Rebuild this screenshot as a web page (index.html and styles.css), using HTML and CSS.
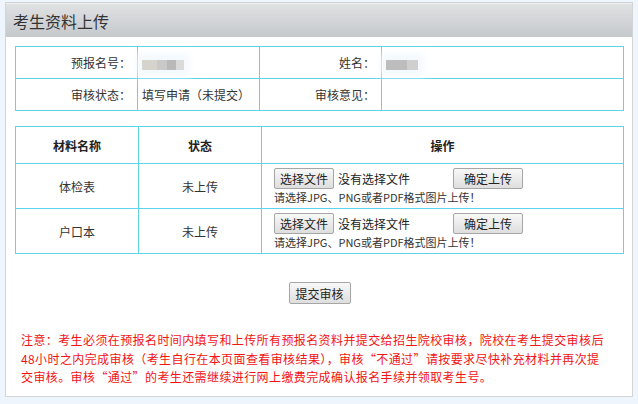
FILE: index.html
```html
<!DOCTYPE html>
<html lang="zh-CN">
<head>
<meta charset="utf-8">
<title>考生资料上传</title>
<link rel="stylesheet" href="styles.css">
</head>
<body>
<div class="panel">
  <div class="panel-head">考生资料上传</div>
  <div class="panel-body">
    <table class="info">
      <tr>
        <td class="lbl">预报名号：</td>
        <td class="val"><span class="mask mask-id"></span></td>
        <td class="lbl">姓名：</td>
        <td class="val"><span class="mask mask-name"></span></td>
      </tr>
      <tr>
        <td class="lbl">审核状态：</td>
        <td class="val">填写申请（未提交）</td>
        <td class="lbl">审核意见：</td>
        <td class="val"></td>
      </tr>
    </table>

    <table class="files">
      <tr class="head">
        <th class="c1">材料名称</th>
        <th class="c2">状态</th>
        <th>操作</th>
      </tr>
      <tr>
        <td>体检表</td>
        <td>未上传</td>
        <td class="op">
          <div class="op-line">
            <span class="filebox"><button class="btn btn-file">选择文件</button><span class="nofile">没有选择文件</span></span><button class="btn btn-up">确定上传</button>
          </div>
          <div class="hint">请选择JPG、PNG或者PDF格式图片上传！</div>
        </td>
      </tr>
      <tr>
        <td>户口本</td>
        <td>未上传</td>
        <td class="op">
          <div class="op-line">
            <span class="filebox"><button class="btn btn-file">选择文件</button><span class="nofile">没有选择文件</span></span><button class="btn btn-up">确定上传</button>
          </div>
          <div class="hint">请选择JPG、PNG或者PDF格式图片上传！</div>
        </td>
      </tr>
    </table>

    <div class="submit-row"><button class="btn btn-submit">提交审核</button></div>

    <p class="notice">注意：考生必须在预报名时间内填写和上传所有预报名资料并提交给招生院校审核，院校在考生提交审核后48小时之内完成审核（考生自行在本页面查看审核结果），审核“不通过”请按要求尽快补充材料并再次提交审核。审核“通过”的考生还需继续进行网上缴费完成确认报名手续并领取考生号。</p>
  </div>
</div>
</body>
</html>
```
FILE: styles.css
```css
html, body {
  margin: 0;
  padding: 0;
}
body {
  background: #eef5fc;
  padding: 2px 5px 0 5px;
  font-family: "Noto Sans CJK SC", "Noto Sans", "Liberation Sans", sans-serif;
  font-size: 12px;
  color: #333;
}
.panel {
  background: #fff;
  border: 1px solid #d2d4d6;
  box-sizing: border-box;
  height: 395px;
}
.panel-head {
  height: 34px;
  line-height: 34px;
  padding-left: 7px;
  font-size: 16px;
  color: #333;
  background: linear-gradient(#dfe1e3, #c6c9cc);
  border-top: 1px solid #eceeef;
  box-sizing: border-box;
}
.panel-body {
  padding: 9px 8px 0 9px;
}
table {
  border-collapse: collapse;
  width: 609px;
  table-layout: fixed;
}
td, th {
  border: 1px solid #5dd3ec;
  padding: 0;
}
.info td {
  height: 31px;
}
.info .lbl {
  text-align: right;
  padding-right: 6px;
}
.info .val {
  padding-left: 4px;
}
.info tr td:nth-child(1),
.info tr td:nth-child(2),
.info tr td:nth-child(3) {
  width: 122px;
  box-sizing: border-box;
}
.mask {
  display: inline-block;
  height: 10px;
  vertical-align: middle;
  background: linear-gradient(90deg, #d6d2cc 0 35%, #c9c9c9 35% 60%, #b9b9b9 60% 80%, #dadada 80%);
  filter: blur(0.6px);
  box-shadow: 0 0 8px 6px #f3f9fd;
}
.mask-id {
  width: 42px;
}
.mask-name {
  width: 32px;
  background: linear-gradient(90deg, #bdbdbd 0 65%, #cfcfcf 65%);
}
.files {
  margin-top: 15px;
}
.files th {
  height: 36px;
  font-weight: bold;
  color: #222;
}
.files .c1, .files .c2 {
  width: 122px;
}
.files td {
  height: 44px;
  text-align: center;
}
.files td.op {
  text-align: left;
  padding-left: 12px;
  vertical-align: top;
}
.op-line {
  display: flex;
  align-items: center;
  margin-top: 4px;
}
.filebox {
  display: inline-flex;
  align-items: center;
  width: 179px;
}
.nofile {
  margin-left: 4px;
  color: #222;
}
.btn {
  font-family: "Noto Sans CJK SC", "Noto Sans", sans-serif;
  font-size: 12px;
  color: #222;
  height: 21px;
  line-height: 19px;
  padding: 0 5px;
  border: 1px solid #a6a6a6;
  border-radius: 2px;
  background: linear-gradient(#f8f8f8, #dedede);
  box-sizing: border-box;
}
.btn-up {
  width: 70px;
}
.btn-file {
  width: 60px;
}
.hint {
  font-size: 11px;
  line-height: 14px;
  margin-top: 1px;
  color: #333;
}
.submit-row {
  display: flex;
  justify-content: center;
  margin-top: 28px;
}
.btn-submit {
  height: 22px;
  width: 62px;
  padding: 0;
}
.notice {
  margin: 27px 0 0 0;
  padding: 0 15px 0 6px;
  color: #f21313;
  font-size: 12px;
  line-height: 18.5px;
  letter-spacing: 0.4px;
}
```
